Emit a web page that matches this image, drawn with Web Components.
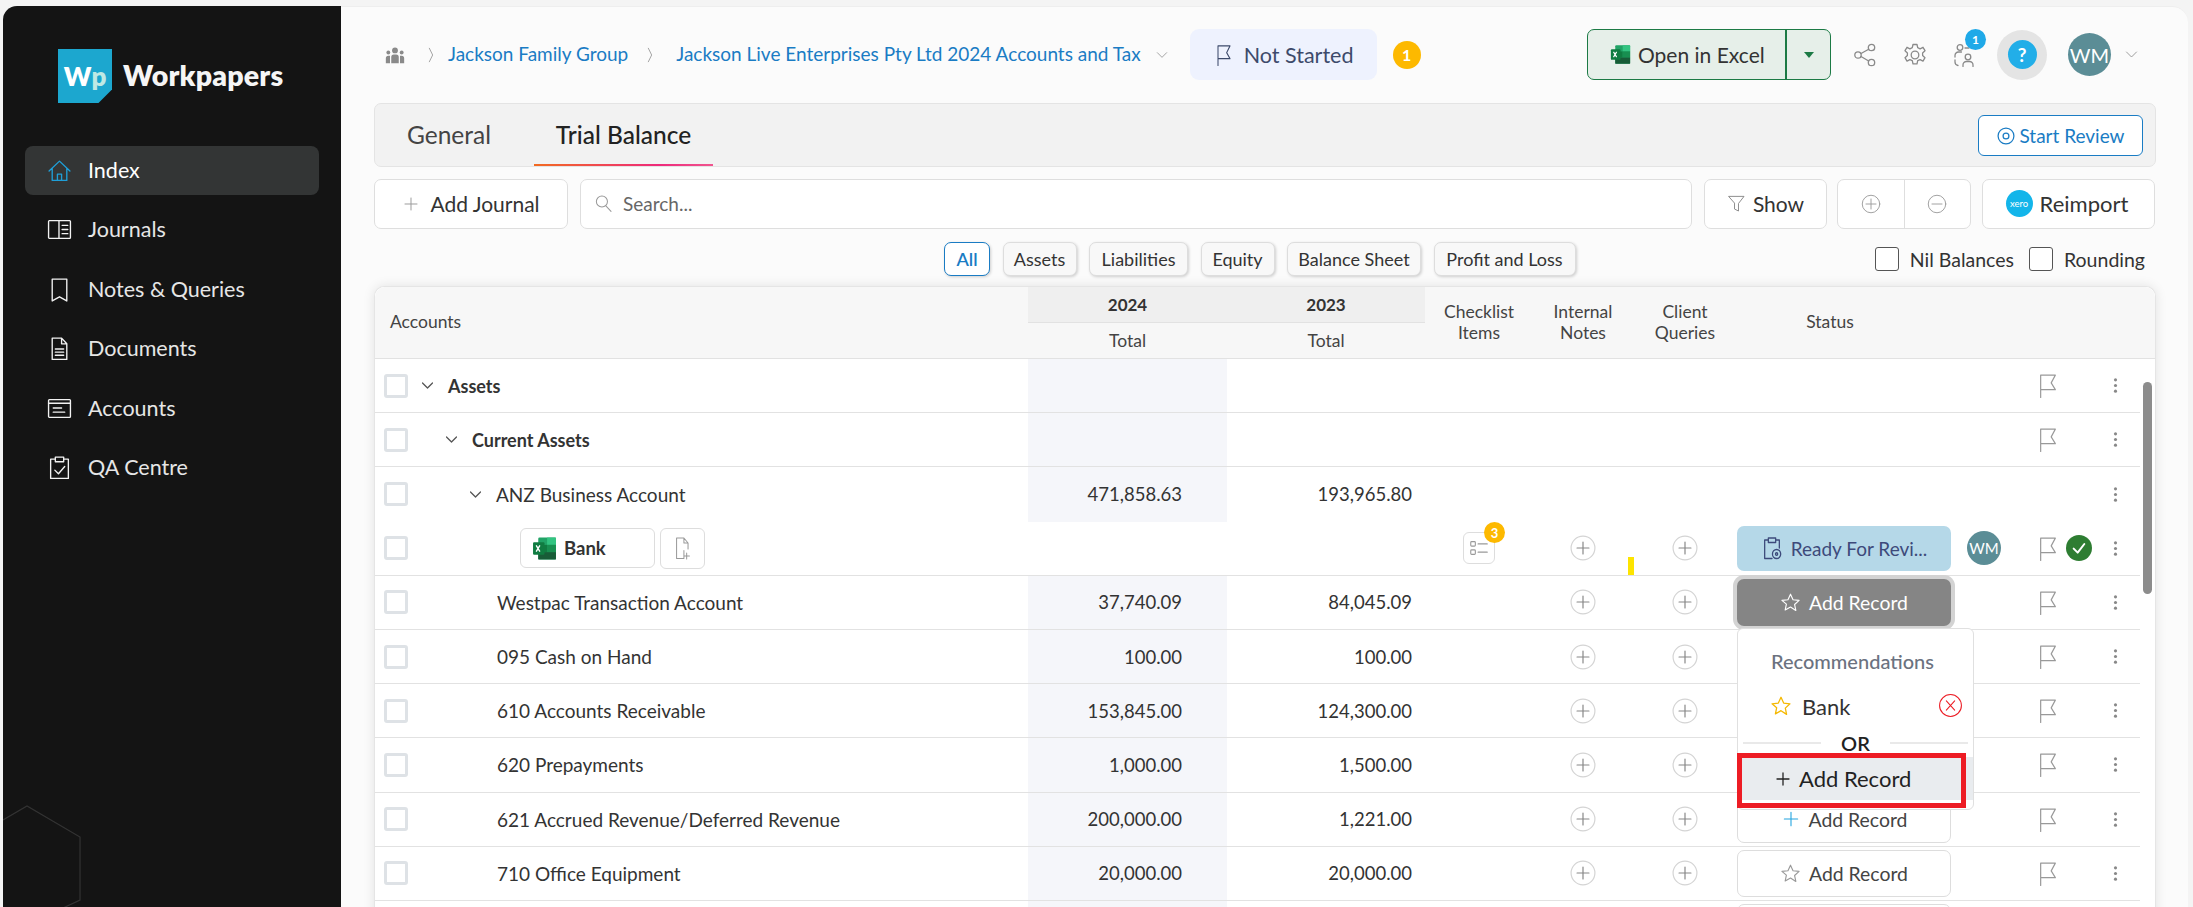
<!DOCTYPE html>
<html lang="en"><head><meta charset="utf-8"><title>Workpapers</title>
<style>
html,body{margin:0;height:907px;overflow:hidden;background:#f4f4f4;font-family:Lato,"Liberation Sans",sans-serif}
</style></head><body><wp-app></wp-app>
<script>
const ICONS={
home:'<path d="M2 12.500 12 3l10 9.500M5 10v11.500h14V10M10 21.500V15.500h4v6"/>',
journals:'<rect x="1.500" y="3.500" width="21" height="17" rx=".8"/><path d="M11.500 3.500v17M14.500 8h5.500M14.500 12h5.500M14.500 16h5.500"/>',
bookmark:'<path d="M5 2h14v21l-7-4-7 4z"/>',
doc:'<path d="M5 2h9l5 5.500V22.500H5zM14 2v5.500h5M8 12.500h8M8 15.500h8M8 18.500h8"/>',
accounts:'<rect x="1.500" y="3.500" width="21" height="17" rx=".8"/><path d="M1.500 7h21M6 11.500h8M6 15.500h11"/>',
qa:'<path d="M8 4H3.500v18.500h17V4H16M8 2h8v4.500H8zM7.500 14.500l3.500 3.500 6-7"/>',
group:'<g fill="currentColor" stroke="none"><circle cx="12" cy="6.500" r="3.500"/><circle cx="4" cy="9" r="2.300"/><circle cx="20" cy="9" r="2.300"/><path d="M7.500 22v-7.500a3 3 0 0 1 3-3h3a3 3 0 0 1 3 3V22zM1 22v-6a3 3 0 0 1 3-3h2v9zM23 22v-6a3 3 0 0 0-3-3h-2v9z"/></g>',
chevR:'<path d="M8 3l8 9-8 9"/>',
chevD:'<path d="M4 8l8 8 8-8"/>',
tick:'<path d="M4 13l6 6L20 6"/>',
flag:'<path d="M4 23.500V2h16l-4.500 7.500L20 16H4"/>',
plus:'<path d="M12 4v16M4 12h16"/>',
search:'<circle cx="10" cy="9.500" r="7"/><path d="M15 15l6.500 7"/>',
filter:'<path d="M2.500 3h19l-7 9v9.500l-5-2.500v-7z"/>',
cplus:'<circle cx="12" cy="12" r="10.500"/><path d="M12 6v12M6 12h12"/>',
rplus:'<circle cx="12" cy="12" r="11" stroke="#d4d4d4"/><path d="M12 6.500v11M6.500 12h11"/>',
cminus:'<circle cx="12" cy="12" r="10.500"/><path d="M6 12h12"/>',
eye:'<circle cx="12" cy="12" r="9.500"/><circle cx="12" cy="12" r="3.500"/>',
share:'<circle cx="18.500" cy="4.500" r="3.200"/><circle cx="5" cy="12" r="3.200"/><circle cx="18.500" cy="19.500" r="3.200"/><path d="M8 10.500l7.700-4.300M8 13.500l7.700 4.500"/>',
gear:'<circle cx="12" cy="12" r="3.800"/><path d="M10 1.500h4l.7 3.200 2.400 1.100 2.900-1.500 2 3.400-2.400 2.200v2.600l2.400 2.200-2 3.400-2.900-1.500-2.400 1.100-.7 3.200h-4l-.7-3.200-2.400-1.100-2.900 1.500-2-3.400 2.400-2.200v-2.600L2 7.700l2-3.400 2.900 1.500 2.400-1.100z"/>',
people:'<circle cx="8" cy="4.500" r="2.800"/><path d="M3 14v-1.500a3.500 3.500 0 0 1 3.500-3.500h3M13 5h4"/><circle cx="16" cy="14" r="2.800"/><path d="M11 23.500V22a3.500 3.500 0 0 1 3.500-3.500h3A3.500 3.500 0 0 1 21 22v1.500M3 17v2a3.500 3.500 0 0 0 3 3.500"/>',
star:'<path d="M12 2.500l2.900 6.300 6.900.8-5.100 4.700 1.400 6.800L12 17.100l-6.100 3.500 1.400-6.800L2.200 9.600l6.900-.8z"/>',
checklist:'<rect x="3" y="5" width="5" height="5" rx="1"/><rect x="3" y="14" width="5" height="5" rx="1"/><path d="M11 7.500h10M11 16.500h10"/>',
fileadd:'<path d="M13 14.500V22.500H5V2h8l4.500 5v6M13 2v5h4.500M16 17v6M13 20h6"/>',
clip:'<path d="M8 4H4v18.500h8M16 4h4v8M8 2h8v4.500H8z"/><circle cx="17" cy="18" r="4.500"/><circle cx="17" cy="18" r="1.200"/>',
kebab:'<g fill="currentColor" stroke="none"><circle cx="12" cy="4" r="2.200"/><circle cx="12" cy="12" r="2.200"/><circle cx="12" cy="20" r="2.200"/></g>',
xc:'<circle cx="12" cy="12" r="10.500"/><path d="M8 7.500l8 9M16 7.500l-8 9"/>'
};
class Base extends HTMLElement{
  constructor(){super();this.attachShadow({mode:'open'})}
  connectedCallback(){this.shadowRoot.innerHTML=`<style>${this.css()}</style>${this.html()}`}
  css(){return ''} html(){return '<slot></slot>'}
  attr(n,d=''){return this.hasAttribute(n)?this.getAttribute(n):d}
}
class WpIcon extends Base{
  css(){const w=this.attr('w',this.attr('size','24')),h=this.attr('h',this.attr('size','24'));
    return `:host{display:inline-flex;flex:none;width:${w}px;height:${h}px;color:${this.attr('color','#888')}}svg{width:100%;height:100%;display:block}`}
  html(){return `<svg viewBox="0 0 24 24" preserveAspectRatio="none" fill="none" stroke="currentColor" stroke-width="${this.attr('sw','1.5')}" stroke-linejoin="round" stroke-linecap="round">${ICONS[this.attr('name')]||''}</svg>`}
}
class WpExcel extends Base{
  css(){const s=this.attr('size','24');return `:host{display:inline-flex;flex:none;width:${s}px;height:${s}px}svg{width:100%;height:100%;display:block}`}
  html(){return `<svg viewBox="0 0 24 24"><rect x="6" y="1.500" width="17" height="21" rx="1.200" fill="#21a366"/><rect x="14.500" y="1.500" width="8.500" height="7" fill="#33c481"/><rect x="6" y="8.500" width="8.500" height="7" fill="#107c41"/><rect x="14.500" y="8.500" width="8.500" height="7" fill="#188f50"/><rect x="6" y="15.500" width="17" height="7" fill="#185c37"/><rect x="1" y="6" width="11" height="12" rx="1" fill="#107c41"/><path d="M4 9l3.600 6M7.600 9L4 15" stroke="#fff" stroke-width="1.300"/></svg>`}
}
class WpNavItem extends Base{
  css(){return `:host{display:flex;align-items:center;height:49px;padding-left:22px;gap:16px;border-radius:8px;font-size:21.500px;line-height:47px;color:${this.hasAttribute('active')?'#fff':'#e6e6e6'};background:${this.hasAttribute('active')?'#333535':'transparent'}}`}
  html(){return `<wp-icon name="${this.attr('icon')}" size="25" color="${this.hasAttribute('active')?'#1f9fd8':'#f2f2f2'}" sw="1.300"></wp-icon><slot></slot>`}
}
class WpSidebar extends Base{
  css(){return `:host{display:block;position:relative;flex:none;width:338px;height:901px;margin-top:6px;margin-left:3px;background:#141414;border-top-left-radius:14px;overflow:hidden}
  .logo{display:flex;align-items:center;gap:11px;padding:43px 0 0 55px;height:54px}
  .mark{width:54px;height:54px;flex:none;background:#1ca7cf;clip-path:polygon(0 0,100% 0,100% 75%,75% 100%,0 100%);display:flex;align-items:center;justify-content:center;font:800 26px Lato,sans-serif;color:#fff}
  .mark span{color:#bfe9e4}
  .name{font:800 28.500px Lato,sans-serif;color:#f5f5f5;letter-spacing:.2px;margin-top:-2px}
  nav{display:flex;flex-direction:column;gap:10.400px;margin:43px 22px 0}
  svg{position:absolute;left:0;bottom:0}`}
  html(){return `<div class="logo"><div class="mark">W<span>p</span></div><div class="name">Workpapers</div></div>
  <nav><wp-nav-item icon="home" active>Index</wp-nav-item><wp-nav-item icon="journals">Journals</wp-nav-item><wp-nav-item icon="bookmark">Notes &amp; Queries</wp-nav-item><wp-nav-item icon="doc">Documents</wp-nav-item><wp-nav-item icon="accounts">Accounts</wp-nav-item><wp-nav-item icon="qa">QA Centre</wp-nav-item></nav>
  <svg width="90" height="110" fill="none" stroke="#333" stroke-width="1.200"><path d="M0 23L24 9l53 31v63l-17 8"/></svg>`}
}
class WpTopbar extends Base{
  css(){return `:host{display:flex;align-items:center;height:51px;margin-top:22px;font-size:19px;line-height:48px;color:#1a7cc4}
  .crumbs{display:flex;align-items:center}
  a{color:#1a7cc4;text-decoration:none;white-space:nowrap;margin-top:-2px}
  .pill{display:flex;align-items:center;gap:11px;height:51px;width:187px;box-sizing:border-box;padding-left:25px;margin-left:21px;background:#eef2fe;border-radius:9px;color:#3d4a6b;font-size:21.500px}
  .one{width:28px;height:28px;border-radius:50%;background:#fdb900;color:#fff;font:700 16px Lato,sans-serif;display:flex;align-items:center;justify-content:center;margin-left:16px}
  .right{margin-left:auto;display:flex;align-items:center}
  .xl{display:flex;width:244px;height:51px;box-sizing:border-box;border:1.500px solid #1c7a45;border-radius:7px;background:#e6efe9;color:#333;font-size:21px}
  .xl .a{width:199px;display:flex;align-items:center;gap:7px;padding-left:22px;box-sizing:border-box;border-right:2px solid #1c7a45}
  .xl .b{flex:1;display:flex;align-items:center;justify-content:center}
  .tri{width:0;height:0;border:5px solid transparent;border-top:6px solid #1c7a45;border-bottom:0}
  .ic{position:relative;display:flex}
  .bd{position:absolute;left:13px;top:-14px;width:21px;height:21px;border-radius:50%;background:#1fa9e8;color:#fff;font:700 12px Lato,sans-serif;display:flex;align-items:center;justify-content:center}
  .help{width:50px;height:50px;border-radius:50%;background:#e4e4e4;display:flex;align-items:center;justify-content:center;margin-left:21px}
  .help b{width:29px;height:29px;border-radius:50%;background:#22aee8;color:#fff;font:700 19px Lato,sans-serif;display:flex;align-items:center;justify-content:center}
  .wm{width:43px;height:43px;border-radius:50%;background:#5b8d96;color:#fff;font-size:20px;display:flex;align-items:center;justify-content:center;margin-left:21px}`}
  html(){return `<div class="crumbs"><wp-icon name="group" size="20" color="#8a8a8a" style="margin:0 21px 0 11px"></wp-icon><wp-icon name="chevR" w="10" h="18" color="#888" sw="1.300"></wp-icon><a style="margin-left:12px;margin-right:17px">Jackson Family Group</a><wp-icon name="chevR" w="10" h="18" color="#888" sw="1.300"></wp-icon><a style="margin-left:21px;margin-right:14px">Jackson Live Enterprises Pty Ltd 2024 Accounts and Tax</a><wp-icon name="chevD" w="14" h="14" color="#888" sw="1.300"></wp-icon></div>
  <div class="pill"><wp-icon name="flag" w="18" h="22" color="#3d4a6b" sw="1.400"></wp-icon>Not Started</div><div class="one">1</div>
  <div class="right"><div class="xl"><div class="a"><wp-excel size="21"></wp-excel>Open in Excel</div><div class="b"><div class="tri"></div></div></div>
  <wp-icon name="share" size="24" color="#8a8a8a" sw="1.300" style="margin-left:22px"></wp-icon><wp-icon name="gear" size="24" color="#8a8a8a" sw="1.300" style="margin-left:26px"></wp-icon>
  <div class="ic" style="margin-left:25px"><wp-icon name="people" size="24" color="#8a8a8a" sw="1.300"></wp-icon><div class="bd">1</div></div>
  <div class="help"><b>?</b></div><div class="wm">WM</div><wp-icon name="chevD" w="15" h="15" color="#888" sw="1.300" style="margin:0 17px 0 13px"></wp-icon></div>`}
}
class WpTabs extends Base{
  css(){return `:host{display:flex;align-items:stretch;height:64px;box-sizing:border-box;margin-top:23px;background:#f2f2f2;border:1px solid #e4e4e4;border-radius:7px;font-size:24.500px;color:#444}
  .t{display:flex;align-items:center;justify-content:center;box-sizing:border-box;padding-bottom:2px}
  .g{width:159px;padding-left:32px;justify-content:flex-start}
  .tb{width:179px;color:#222;font-weight:500;position:relative;font-size:24.500px}
  .tb:after{content:"";position:absolute;left:0;right:0;bottom:0;height:2px;background:linear-gradient(90deg,#f26b21,#ee2a7b 70%,#f0558f)}
  .sr{margin:11px 12px 0 auto;height:41px;width:165px;box-sizing:border-box;border:1.500px solid #1a7cc4;border-radius:6px;background:#fff;color:#1a7cc4;font-size:19px;display:flex;align-items:center;justify-content:center;gap:3px}`}
  html(){return `<div class="t g">General</div><div class="t tb">Trial Balance</div><div class="sr"><wp-icon name="eye" w="20" h="20" color="#1a7cc4"></wp-icon>Start Review</div>`}
}
class WpToolbar extends Base{
  css(){return `:host{display:flex;height:50px;margin-top:12px;font-size:21px;color:#333}
  .b{box-sizing:border-box;height:50px;padding-bottom:1px;background:#fff;border:1px solid #dedede;border-radius:7px;display:flex;align-items:center}
  .aj{width:194px;justify-content:center;gap:10px}
  .s{width:1112px;margin-left:12px;padding-left:13px;gap:10px;color:#666;font-size:19px}
  .sh{width:123px;margin-left:12px;justify-content:center;gap:7px}
  .z{width:134px;margin-left:10px;padding-bottom:0}
  .z div{flex:1;display:flex;justify-content:center;align-items:center;height:100%}
  .z div+div{border-left:1px solid #dedede}
  .re{width:173px;margin-left:11px;justify-content:center;gap:7px;font-size:22px;padding-right:3px}
  .xero{width:27px;height:27px;border-radius:50%;background:#13b5ea;color:#fff;font-size:9.500px;display:flex;align-items:center;justify-content:center}`}
  html(){return `<div class="b aj"><wp-icon name="plus" size="18" color="#999" sw="1.300"></wp-icon>Add Journal</div><div class="b s"><wp-icon name="search" size="19" color="#999" sw="1.300"></wp-icon>Search...</div><div class="b sh"><wp-icon name="filter" size="19" color="#888" sw="1.200"></wp-icon>Show</div><div class="b z"><div><wp-icon name="cplus" size="20" color="#999" sw="1.100"></wp-icon></div><div><wp-icon name="cminus" size="20" color="#999" sw="1.100"></wp-icon></div></div><div class="b re"><div class="xero">xero</div>Reimport</div>`}
}
class WpChip extends Base{
  css(){const on=this.hasAttribute('on');return `:host{display:flex;align-items:center;justify-content:center;box-sizing:border-box;height:34px;width:${this.attr('w')}px;background:${on?'#fff':'#f8f8f8'};border:1px solid ${on?'#1a7cc4':'#ddd'};border-radius:7px;box-shadow:1px 1px 3px rgba(0,0,0,.18);font-size:18px;font-weight:${on?600:400};color:${on?'#1a7cc4':'#333'}}`}
}
class WpCheck extends Base{
  css(){return `:host{display:inline-flex;align-items:center;gap:11px;font-size:19.500px;color:#333}i{display:block;width:24px;height:24px;box-sizing:border-box;border:1px solid #555;border-radius:3px;background:#fff}`}
  html(){return `<i></i><slot></slot>`}
}
class WpFilters extends Base{
  css(){return `:host{display:flex;align-items:center;height:34px;margin-top:13px;position:relative}
  .c{display:flex;gap:12.500px;margin-left:570px}
  .r{margin-left:auto;display:flex;gap:15px;padding-right:11px}`}
  html(){return `<div class="c"><wp-chip on w="46">All</wp-chip><wp-chip w="74">Assets</wp-chip><wp-chip w="99">Liabilities</wp-chip><wp-chip w="74">Equity</wp-chip><wp-chip w="134">Balance Sheet</wp-chip><wp-chip w="142">Profit and Loss</wp-chip></div><div class="r"><wp-check>Nil Balances</wp-check><wp-check>Rounding</wp-check></div>`}
}
const GRID='653px 199px 198px 108px 100px 104px 214px 66px 48px 28px 48px';
class WpStatus extends Base{
  css(){const k=this.attr('kind');const m={ready:'background:#b5d8e8;color:#3d4a7b;height:45px;border:0',grey:'background:#858585;color:#fff;height:47px;border:0;box-shadow:0 0 0 4px #d3d3d3',plain:'background:#fff;color:#444;height:47px;border:1px solid #ddd'};
    return `:host{display:flex;align-items:center;justify-content:center;gap:8px;box-sizing:border-box;width:214px;border-radius:7px;font-size:${k==='ready'?19:19.400}px;${m[k]}}`}
  html(){const k=this.attr('kind');
    if(k==='ready')return `<wp-icon name="clip" w="22" h="24" color="#3d4a7b" sw="1.400"></wp-icon>Ready For Revi...`;
    if(k==='grey')return `<wp-icon name="star" size="21" color="#fff" sw="1.300"></wp-icon>Add Record`;
    return `<wp-icon name="${this.attr('icon','star')}" size="${this.attr('icon')==='plus'?20:21}" color="${this.attr('icon')==='plus'?'#22a4e0':'#999'}" sw="1.300"></wp-icon>Add Record`}
}
class WpRow extends Base{
  css(){const bold=this.hasAttribute('bold');return `:host{display:grid;grid-template-columns:${GRID};height:54.200px;box-sizing:border-box;border-bottom:${this.hasAttribute('noline')?'0':'1px solid #e2e2e2'};font-size:18.500px;color:#333;align-items:center}
  .acc{display:flex;align-items:center;height:100%;padding-left:9px;position:relative;font-weight:${bold?700:400};font-size:${bold?'18px':'19px'}}
  .box{width:24px;height:24px;box-sizing:border-box;border:3px solid #dee2e6;border-radius:3px;background:#fff;flex:none}
  .n{height:100%;display:flex;align-items:center;justify-content:flex-end;box-sizing:border-box}
  .y24{background:${this.hasAttribute('noshade')?'transparent':'#f5f6fa'};padding-right:45px}
  .y23{padding-right:13px}
  .c{display:flex;justify-content:center;align-items:center;height:100%;position:relative}
  .flag{justify-content:flex-end;padding-right:6px}
  .keb{padding-right:3px;box-sizing:border-box}
  .chip{display:flex;align-items:center;gap:7px;box-sizing:border-box;width:135px;height:40px;border:1px solid #ddd;border-radius:6px;padding-left:11px;background:#fff;font-weight:700;font-size:18.500px;margin-left:112px}
  .fa{display:flex;align-items:center;justify-content:center;box-sizing:border-box;width:45px;height:41px;border:1px solid #ddd;border-radius:6px;margin-left:5px}
  .cl{display:flex;align-items:center;justify-content:center;box-sizing:border-box;width:32px;height:32px;border:1px solid #ddd;border-radius:6px;position:relative}
  .cl b{position:absolute;right:-11px;top:-11px;width:21px;height:21px;border-radius:50%;background:#fdb900;color:#fff;font:700 13px Lato,sans-serif;display:flex;align-items:center;justify-content:center}
  .wm{width:34px;height:34px;border-radius:50%;background:#5b8d96;color:#fff;font-size:15px;display:flex;align-items:center;justify-content:center}
  .ok{width:26px;height:26px;border-radius:50%;background:#2e7d32;display:flex;align-items:center;justify-content:center}
  .tick{position:absolute;left:-5px;bottom:0;width:6px;height:18px;background:#fde400}`}
  html(){const lv=+this.attr('level','0'),chev=this.hasAttribute('chev');const name=this.attr('name');
    const indent=lv*24;
    let acc;
    if(this.hasAttribute('bank')) acc=`<div class="chip"><wp-excel size="25"></wp-excel>Bank</div><div class="fa"><wp-icon name="fileadd" w="22" h="24" color="#999" sw="1.100"></wp-icon></div>`;
    else if(chev) acc=`<wp-icon name="chevD" size="15" color="#555" sw="2" style="margin-left:${12+indent}px;margin-right:13px"></wp-icon><span>${name}</span>`;
    else acc=`<span style="margin-left:89px">${name}</span>`;
    const adds=this.hasAttribute('adds');
    const plus=`<wp-icon name="rplus" size="26" color="#888" sw="1.100"></wp-icon>`;
    const st=this.attr('status');
    return `<div class="acc"><div class="box"></div>${acc}</div>
    <div class="n y24">${this.attr('a')}</div><div class="n y23">${this.attr('b')}</div>
    <div class="c">${this.hasAttribute('cl')?'<div class="cl"><wp-icon name="checklist" size="22" color="#999" sw="1.200"></wp-icon><b>3</b></div>':''}</div>
    <div class="c">${adds?plus:''}</div><div class="c">${adds?plus:''}${this.hasAttribute('cl')?'<i class="tick"></i>':''}</div>
    <div class="c">${st?`<wp-status kind="${st}" icon="${this.attr('icon','star')}"></wp-status>`:''}</div>
    <div class="c">${this.hasAttribute('wm')?'<div class="wm">WM</div>':''}</div>
    <div class="c flag">${this.hasAttribute('noflag')?'':'<wp-icon name="flag" w="22" h="25" color="#999" sw="1.300"></wp-icon>'}</div>
    <div class="c">${this.hasAttribute('wm')?'<div class="ok"><wp-icon name="tick" w="16" h="16" color="#fff" sw="3"></wp-icon></div>':''}</div>
    <div class="c keb"><wp-icon name="kebab" size="17" color="#888"></wp-icon></div>`}
}
class WpPopover extends Base{
  css(){return `:host{display:block;position:absolute;left:1362px;top:341px;width:237px;height:182px;box-sizing:border-box;background:#fff;border:1px solid #e0e0e0;border-radius:6px;font-size:18px;color:#333;z-index:3}
  .h{padding:20px 0 0 33px;color:#6b7280;font-weight:500;height:33px;font-size:20px;line-height:24px}
  .bk{display:flex;align-items:center;margin-top:8px;padding-left:32px;height:32px;font-size:22px;position:relative}
  .bk span{margin-left:10px}
  .x{position:absolute;right:10px;top:3px}
  .or{display:flex;align-items:center;justify-content:center;gap:20px;margin:9px 5px 0;height:24px;font-size:20px;font-weight:600;color:#222}
  .or i{flex:1;height:2px;background:#e9e9e9}
  .add{display:flex;align-items:center;gap:7px;height:43px;margin-top:2px;padding-left:36px;background:#e9ecef;font-size:22px;color:#222}
  .red{position:absolute;left:-1px;top:124px;width:229px;height:55px;box-sizing:border-box;border:5px solid #ed1c24}`}
  html(){return `<div class="h">Recommendations</div><div class="bk"><wp-icon name="star" size="22" color="#f5b800" sw="1.400"></wp-icon><span>Bank</span><wp-icon class="x" name="xc" size="25" color="#ec1c24" sw="1"></wp-icon></div><div class="or"><i></i>OR<i></i></div><div class="add"><wp-icon name="plus" size="18" color="#222" sw="1.700"></wp-icon>Add Record</div><div class="red"></div>`}
}
class WpTable extends Base{
  css(){return `:host{display:block;position:relative;margin-top:10px;background:#fff;border:1px solid #e5e5e5;border-bottom:0;border-radius:10px 10px 0 0;box-shadow:0 0 12px rgba(0,0,0,.1);height:640px;box-sizing:border-box}
  .clip{overflow:hidden;height:100%;border-radius:10px 10px 0 0;padding-right:15px;background:#fff}
  .hd{display:grid;grid-template-columns:${GRID};height:71px;background:#f7f7f7;margin-right:-15px;padding-right:15px;border-bottom:1px solid #e2e2e2;font-size:17.500px;color:#444;align-items:center;text-align:center}
  .hd .acc{text-align:left;padding-left:15px;margin-top:-2px}
  .yr{height:100%;display:grid;grid-template-rows:36px 1fr}
  .yr b{font-weight:700;font-size:17px;background:#efefef;display:flex;align-items:center;justify-content:center;border-bottom:1px solid #e2e2e2;color:#333}
  .yr span{display:flex;align-items:center;justify-content:center}
  .two{line-height:21px;margin-top:-2px}
  .bar{position:absolute;right:3px;top:95px;width:9px;height:212px;border-radius:5px;background:#8c8c8c;z-index:2}`}
  html(){return `<div class="clip"><div class="hd"><div class="acc">Accounts</div><div class="yr"><b>2024</b><span>Total</span></div><div class="yr"><b>2023</b><span>Total</span></div><div class="two">Checklist<br>Items</div><div class="two">Internal<br>Notes</div><div class="two">Client<br>Queries</div><div class="two" style="padding-right:28px">Status</div></div>
  <wp-row level="0" chev bold name="Assets"></wp-row>
  <wp-row level="1" chev bold name="Current Assets"></wp-row>
  <wp-row level="2" chev name="ANZ Business Account" a="471,858.63" b="193,965.80" noline noflag></wp-row>
  <wp-row bank noshade cl adds status="ready" wm></wp-row>
  <wp-row name="Westpac Transaction Account" a="37,740.09" b="84,045.09" adds status="grey"></wp-row>
  <wp-row name="095 Cash on Hand" a="100.00" b="100.00" adds></wp-row>
  <wp-row name="610 Accounts Receivable" a="153,845.00" b="124,300.00" adds></wp-row>
  <wp-row name="620 Prepayments" a="1,000.00" b="1,500.00" adds></wp-row>
  <wp-row name="621 Accrued Revenue/Deferred Revenue" a="200,000.00" b="1,221.00" adds status="plain" icon="plus"></wp-row>
  <wp-row name="710 Office Equipment" a="20,000.00" b="20,000.00" adds status="plain"></wp-row>
  <wp-row name="" a="" b="" adds status="plain"></wp-row></div>
  <div class="bar"></div><wp-popover></wp-popover>`}
}
class WpApp extends Base{
  css(){return `:host{display:flex;height:907px;overflow:hidden}
  main{width:1847px;margin-top:6px;height:901px;background:#fbfbfb;border-top:1px solid #eee;border-top-right-radius:16px;padding:0 32px 0 33px;box-sizing:border-box;overflow:hidden}`}
  html(){return `<wp-sidebar></wp-sidebar><main><wp-topbar></wp-topbar><wp-tabs></wp-tabs><wp-toolbar></wp-toolbar><wp-filters></wp-filters><wp-table></wp-table></main>`}
}
[['wp-icon',WpIcon],['wp-excel',WpExcel],['wp-nav-item',WpNavItem],['wp-sidebar',WpSidebar],['wp-topbar',WpTopbar],['wp-tabs',WpTabs],['wp-toolbar',WpToolbar],['wp-chip',WpChip],['wp-check',WpCheck],['wp-filters',WpFilters],['wp-status',WpStatus],['wp-row',WpRow],['wp-popover',WpPopover],['wp-table',WpTable],['wp-app',WpApp]].forEach(([n,c])=>customElements.define(n,c));
</script></body></html>
